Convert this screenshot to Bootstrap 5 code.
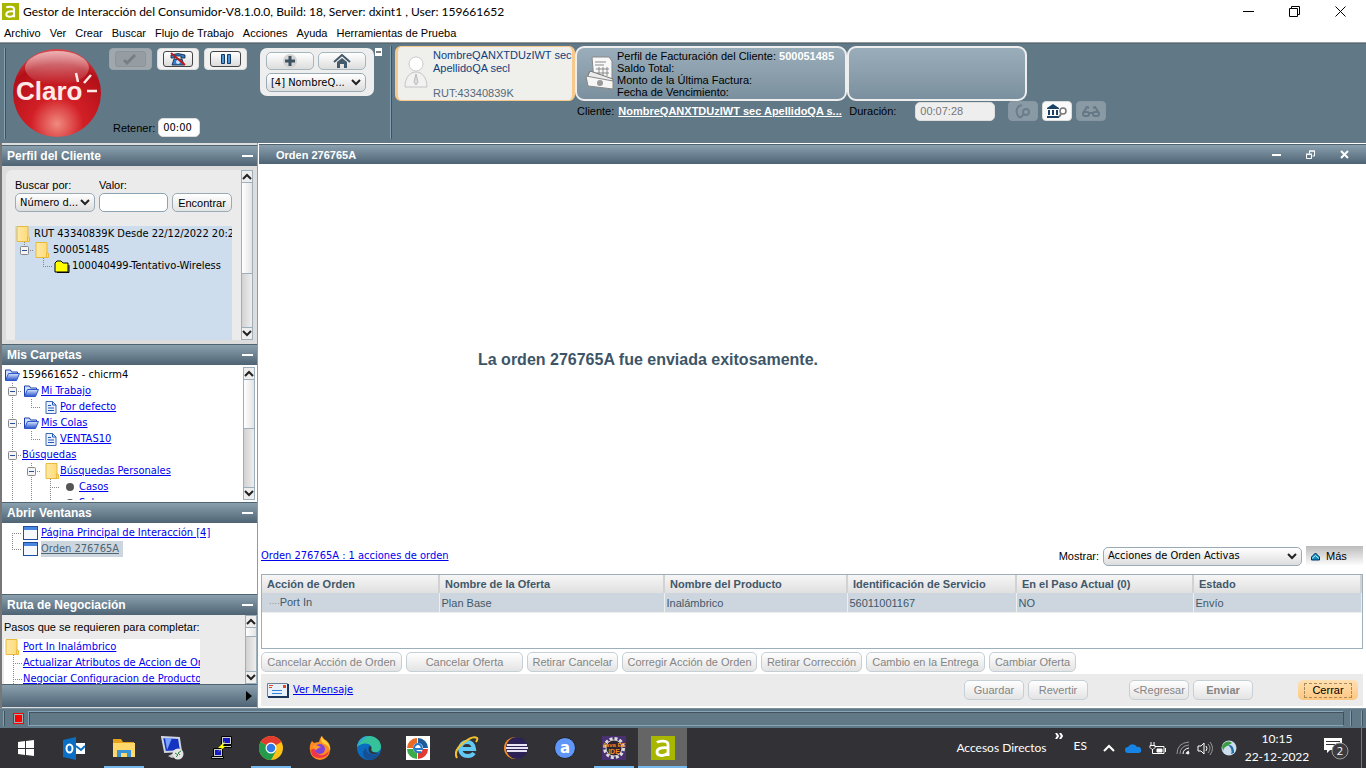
<!DOCTYPE html>
<html lang="es">
<head>
<meta charset="utf-8">
<meta name="viewport" content="width=device-width, initial-scale=1">
<title>Gestor de Interacción del Consumidor</title>
<link rel="stylesheet" href="https://cdn.jsdelivr.net/npm/bootstrap@5.3.0/dist/css/bootstrap.min.css">
<style>
:root{--slate:#617887;--edge:#9cafbb;--ink:#3d5567;--grey:#ebebeb}
body{font-family:"Liberation Sans",sans-serif;font-size:11px;line-height:16px;color:#000;background:#fff;min-width:1200px}
svg{display:block;flex:none}
a{color:#0000f0;text-underline-offset:1px}
.tah,.form-select,.tree{font-family:"DejaVu Sans Condensed","DejaVu Sans",sans-serif;font-size:11px}
.ui{font-family:Lato,"Open Sans",sans-serif}
.titlebar{height:22px;padding:1px 20px 0 2px;font-size:12px}
.titlebar button,.hdr button,.flat{background:none;border:0;padding:0;color:inherit}
.menubar{height:21px;padding:1px 0 0 4px;gap:9px;border-bottom:1px solid #999}
.menubar a{color:#000;text-decoration:none}
/* toolbar */
.toolbar{height:100px;background:var(--slate);border-top:1px solid #536a78}
.grip{width:2px;flex:none;background:#86a1b3;border-right:1px solid #3e535f}
.tbtn{width:44px;height:22px;padding:2px 5px;border-radius:4px;background:#f1f1f1;border:1px solid #ddd}
.tbtn>span{display:flex;height:16px;align-items:center;justify-content:center;border:1px solid #444;border-radius:3px;background:linear-gradient(#fff,#dcdcdc)}
.tbtn:disabled{background:#a1a8ad;border-color:#98a4ac;opacity:1}
.tbtn:disabled>span{background:#959da2;border-color:#8a949a}
.inp{height:19px;padding:0 4px;border:1px solid #ddd;border-radius:5px;background:#fff;font-size:11px;color:#000}
.navbox{width:114px;height:48px;padding:4px 8px 4px 6px;border-radius:7px;background:#eee}
.navbtn{width:48px;height:18px;padding:0;border:1px solid #a6b6bf;border-radius:5px;background:linear-gradient(#fff,#ddd)}
.form-select{height:19px;padding:0 16px 0 4px;line-height:16px;border:1px solid #9aabb6;border-radius:5px;color:#000;background-color:#eee;background-image:url("data:image/svg+xml,%3Csvg xmlns='http://www.w3.org/2000/svg' viewBox='0 0 10 7'%3E%3Cpath d='M1 1l4 4 4-4' fill='none' stroke='%23222' stroke-width='2'/%3E%3C/svg%3E"),linear-gradient(#fff,#ddd);background-size:10px 7px,100% 100%;background-position:right 4px center,0 0}
.who{width:180px;height:55px;border-radius:6px;border:solid #f8c98c;border-width:1px 3px;background:#efefec;color:#10407c;line-height:13px}
.info{height:55px;border:2px solid #eee;border-radius:9px;background:linear-gradient(#9aadba,#7b909e);line-height:12px}
.mini{width:30px;height:20px;padding:0;border-radius:4px;border:1px solid #ddd;background:#fafafa;display:flex;align-items:center;justify-content:center}
.mini:disabled{background:#a0adb5;border-color:#9aa9b2}
/* side panels */
.side{width:258px;flex:none;border-left:2px solid #777;border-right:1px solid #999;background:#ddd;padding:2px 0 1px}
.hdr{flex:none;height:21px;padding:0 4px 0 5px;color:#fff;font-weight:700;background:linear-gradient(#8aa0af,#4e6474);border-top:1px solid #50646f}
.side .hdr{font-size:12px}
.pane{min-height:0;overflow:hidden;background:#fff}
.p1{flex:170 1 0}.p2{flex:132 1 0}.p3{flex:69 1 0}.p4{flex:69 1 0}
.sbar{width:12px;flex:none;border:1px solid var(--edge);background:linear-gradient(90deg,#d2d2d2,#eee)}
.sbar>i{display:flex;flex:none;height:12px;align-items:center;justify-content:center;background:#eee;border-bottom:1px solid var(--edge)}
.sbar>i:last-child{border-bottom:0;border-top:1px solid var(--edge)}
.thumb{background:linear-gradient(90deg,#fff,#e4e4e4);border-bottom:1px solid var(--edge)}
.tree{list-style:none;margin:0;padding:0;overflow:hidden;white-space:nowrap}
.tree li{display:flex;height:16px;line-height:16px}
.tree i{width:19px;height:16px;flex:none;display:flex;align-items:center;padding-left:1px;background-repeat:no-repeat}
.tree i.gl,.tree i.gt{padding-left:5px}
.tree i.mid{padding-left:6px}
.gv{background-image:repeating-linear-gradient(#888 0 1px,transparent 1px 2px);background-size:1px 100%;background-position:9px 0}
.gl,.gt{background-image:repeating-linear-gradient(#888 0 1px,transparent 1px 2px),repeating-linear-gradient(90deg,#888 0 1px,transparent 1px 2px);background-size:1px 8px,10px 1px;background-position:9px 0,9px 8px}
.gt{background-size:1px 100%,10px 1px}
.gf{background-image:repeating-linear-gradient(#888 0 1px,transparent 1px 2px),repeating-linear-gradient(90deg,#888 0 1px,transparent 1px 2px);background-size:1px 8px,10px 1px;background-position:9px 8px,9px 8px}
.btn.ab{flex:none;height:20px;padding:0;line-height:16px;font-size:11px;white-space:nowrap;color:#000;border:1px solid #9aabb6;border-radius:5px;background:linear-gradient(#fff,#e4e4e4)}
.btn.ab:disabled{color:#858585;border-color:#c5cfd6;opacity:1}
.btn.w60{width:60px}
.btn.ab.go{border:0;background:linear-gradient(#ffe0b2,#fdc77f)}
.btn.go span{display:block;margin:0 6px;line-height:13px;border:1px dashed #a98a5c}
/* order grid */
.gridbox{height:75px;border:1px solid var(--edge)}
.gridbox table{width:100%;table-layout:fixed;color:#41586a}
.gridbox th{height:18px;padding:0 5px;line-height:18px;background:linear-gradient(#f6f6f6,#e0e0e0);border-right:2px solid #d2d2d2}
.gridbox td{height:19px;padding:1px 2px 0;line-height:17px;background:#cdd6de;border-right:1px solid #eee;border-bottom:1px solid #eee}
.msg{font-size:16px;font-weight:700;color:var(--ink);margin-left:219px;padding-top:10px}
.status{height:20px;padding:2px 3px;background:var(--slate);border-top:1px solid #7c909d}
.well{border:1px solid #87a5b8;border-right-color:#3e535f;box-shadow:inset 1px 1px #40525e}
.red{width:11px;height:11px;background:red;border:1px solid red;box-shadow:inset 0 0 0 1px #a9aaaa}
/* taskbar */
.taskbar{height:40px;background:#323236;color:#fff;font-size:12px;padding-left:1px}
.taskbar .app{width:49px;height:40px;padding:2px 0 0;border:0;border-bottom:2px solid transparent;background:none;display:flex;align-items:center;justify-content:center}
.app.run{background:linear-gradient(#76b9ed,#76b9ed) center bottom/40px 2px no-repeat!important;background-origin:border-box!important;background-clip:border-box!important}
.taskbar .app.on{background:#656565;border-bottom-color:#76b9ed}
</style>
</head>
<body class="d-flex flex-column vh-100 overflow-hidden">
<svg width="0" height="0" class="position-absolute" aria-hidden="true">
<defs>
<linearGradient id="gb" x2="0" y2="1"><stop stop-color="#dce8ff"/><stop offset="1" stop-color="#2450c8"/></linearGradient>
<linearGradient id="gy"><stop stop-color="#ffe9a5"/><stop offset="1" stop-color="#ffd873"/></linearGradient>
<symbol id="box" viewBox="0 0 9 9"><rect x=".5" y=".5" width="8" height="8" rx="1" fill="#f4f4f4" stroke="#888"/><path d="M2 4.5h5" stroke="#2a4fa0"/></symbol>
<symbol id="note" viewBox="0 0 14 16"><path d="M1 .5h11v10l1.500 1v4H1z" fill="url(#gy)" stroke="#e8b93a"/><path d="M11.500 15v-4l1-1" fill="none" stroke="#e8b93a"/></symbol>
<symbol id="fold" viewBox="0 0 16 14"><path d="M1.500 12V2h5l1 2h6v3" fill="#cfe0ff" stroke="#1c3fa8"/><path d="M1.500 12.500l3-7h11l-3 7z" fill="url(#gb)" stroke="#2d57cf"/></symbol>
<symbol id="doc" viewBox="0 0 12 13"><path d="M1 .5h6.500l3.500 3.500v8.500H1z" fill="#eaf2ff" stroke="#3f69b0"/><path d="M7.500.5V4H11M3 4.500h3M3 7h6M3 9.500h6" fill="none" stroke="#2458b8"/></symbol>
<symbol id="win" viewBox="0 0 15 14"><rect x=".5" y=".5" width="14" height="13" fill="#f5f9ff" stroke="#1e4ca0"/><path d="M1 1h13v3H1z" fill="#4a86e0"/></symbol>
<symbol id="up" viewBox="0 0 10 7"><path d="M1 6l4-4 4 4" fill="none" stroke="#222" stroke-width="2"/></symbol>
<symbol id="dn" viewBox="0 0 10 7"><path d="M1 1l4 4 4-4" fill="none" stroke="#222" stroke-width="2"/></symbol>
<symbol id="amd" viewBox="0 0 24 24"><path fill="#a9b600" d="M0 0h24v24H0z"/><path d="M6 6.500c2-1.700 11-2.500 11 2V20M17 12c-5-1-11 0-11 4s7 5 11 1" fill="none" stroke="#fff" stroke-width="2.800"/></symbol>
</defs>
</svg>

<header class="titlebar ui d-flex align-items-center flex-shrink-0">
  <svg width="17" height="17" class="me-1"><use href="#amd"/></svg>
  <span class="flex-grow-1 text-nowrap">Gestor de Interacción del Consumidor-V8.1.0.0, Build: 18, Server: dxint1 , User: 159661652</span>
  <div class="d-flex" style="gap:35px">
    <button aria-label="Minimizar"><svg width="11" height="11"><path d="M0 5.500h11" stroke="#000"/></svg></button>
    <button aria-label="Restaurar"><svg width="11" height="11" fill="none" stroke="#000"><path d="M.5 2.500h8v8h-8zM2.500 2V.5h8v8H9"/></svg></button>
    <button aria-label="Cerrar ventana"><svg width="11" height="11"><path d="M.5.5l10 10m0-10l-10 10" stroke="#000"/></svg></button>
  </div>
</header>
<nav class="menubar d-flex align-items-center flex-shrink-0">
  <a href="#">Archivo</a><a href="#">Ver</a><a href="#">Crear</a><a href="#">Buscar</a><a href="#">Flujo de Trabajo</a><a href="#">Acciones</a><a href="#">Ayuda</a><a href="#">Herramientas de Prueba</a>
</nav>

<section class="toolbar d-flex flex-shrink-0">
  <div class="d-flex ps-1 pt-1 pb-1" style="width:390px">
    <div class="grip"></div>
    <svg width="92" height="92" viewBox="0 0 92 92" class="ms-1" style="width:92px">
      <defs><radialGradient id="rg" cx=".5" cy=".85" r=".85"><stop stop-color="#f08a80"/><stop offset=".35" stop-color="#d21f26"/><stop offset=".8" stop-color="#b30f18"/><stop offset="1" stop-color="#d8484c"/></radialGradient>
      <linearGradient id="rt" x2="0" y2="1"><stop stop-color="#fff" stop-opacity=".6"/><stop offset="1" stop-color="#fff" stop-opacity="0"/></linearGradient></defs>
      <circle cx="47" cy="45" r="44" fill="url(#rg)"/><ellipse cx="47" cy="20" rx="32" ry="17" fill="url(#rt)"/>
      <text x="6" y="52" font-family="Liberation Sans" font-weight="700" font-size="26" fill="#ffe9e6">Claro</text>
      <path d="M66 25l2 9M81 27l-7 8M77 43h10" stroke="#ffe9e6" stroke-width="2.500"/>
    </svg>
    <div class="d-flex flex-column justify-content-between" style="width:145px;padding:0 0 2px 7px">
      <div class="d-flex" style="gap:5px">
        <button class="btn tbtn" disabled aria-label="Aceptar"><span><svg width="14" height="11"><path d="M1 6l3 3 8-8" fill="none" stroke="#777f84" stroke-width="3"/></svg></span></button>
        <button class="btn tbtn" aria-label="Colgar"><span><svg width="18" height="14"><path d="M2 3q7-3 14 0v3h-4V4H6v2H2zM5 7h8l2 6H3z" fill="#2f7fd0" stroke="#123" stroke-width=".8"/><circle cx="9" cy="10" r="2" fill="#cfe4ff"/><path d="M2 1l14 12" stroke="#c01818" stroke-width="2"/></svg></span></button>
        <button class="btn tbtn" aria-label="Pausa"><span><svg width="12" height="10" fill="#4a96d8" stroke="#123a66"><path d="M1.500.5h3v9h-3zM7.500.5h3v9h-3z"/></svg></span></button>
      </div>
      <div class="d-flex align-items-center" style="gap:3px"><label for="ret" class="ps-1">Retener:</label><input id="ret" class="inp tah" value="00:00" size="4" style="width:42px"></div>
    </div>
    <div class="navbox d-flex flex-column justify-content-between ms-auto">
      <div class="d-flex gap-1">
        <button class="btn navbtn" aria-label="Agregar"><svg class="m-auto" width="16" height="14"><circle cx="8" cy="7" r="7" fill="#d4d4d4"/><path d="M8 2v10M3 7h10" stroke="#3c5362" stroke-width="3"/></svg></button>
        <button class="btn navbtn" aria-label="Inicio"><svg class="m-auto" width="18" height="15"><path d="M1 8l8-7 8 7" fill="none" stroke="#44596a" stroke-width="2"/><path d="M4 8l5-4 5 4v6h-3v-4H7v4H4z" fill="#44596a"/></svg></button>
      </div>
      <select class="form-select" aria-label="Interacción"><option>[4] NombreQ...</option></select>
    </div>
    <button class="flat align-self-start" aria-label="Contraer" style="margin:0 8px 0 1px"><svg width="7" height="8"><path fill="#fff" d="M0 0h7v8H0z"/><path d="M1 4h5" stroke="#000"/></svg></button>
  </div>
  <div class="d-flex pt-1 pb-1" style="margin-top:-2px"><div class="grip me-1"></div></div>
  <div style="margin:2px 0 0 -1px">
    <div class="d-flex">
      <div class="who d-flex">
        <svg width="28" height="42" viewBox="0 0 28 42" class="ms-1 mt-2"><circle cx="14" cy="9" r="7" fill="#fff" stroke="#ccc"/><path d="M3 32c0-20 22-20 22 0z" fill="#f2f2f2" stroke="#c4c4c4"/><path d="M14 19l-2 8 2 3 2-3z" fill="#ddd" stroke="#bbb"/></svg>
        <div class="d-flex flex-column justify-content-between text-nowrap" style="padding:2px 0 0 3px"><div>NombreQANXTDUzIWT sec<br>ApellidoQA secl</div><div style="color:#55697a">RUT:43340839K</div></div>
      </div>
      <div class="info d-flex text-nowrap" style="width:272px">
        <svg width="31" height="36" viewBox="0 0 31 36" class="ms-2 me-0 mt-2"><path d="M7 1h17l3 4v19L9 25z" fill="#f8f8f8" stroke="#888"/><path d="M10 6h11M10 9h9M11 13h13M11 17h13M14 11v9M18 11v9M22 11v9" stroke="#8a8a8a"/><path d="M5 15l23 8-3 10-24-9z" fill="#ececec" stroke="#777"/><path d="M1 20l27 5v8l-25-3z" fill="#f6f6f6" stroke="#888"/><circle cx="15" cy="27" r="3" fill="#999"/></svg>
        <div style="padding:2px 0 0 1px">Perfil de Facturación del Cliente: <b class="text-white">500051485</b><br>Saldo Total:<br>Monto de la Última Factura:<br>Fecha de Vencimiento:</div>
      </div>
      <div class="info" style="width:180px"></div>
    </div>
    <div class="d-flex align-items-center text-nowrap" style="padding-left:182px">
      <span>Cliente:</span><a href="#" class="text-white fw-bold ms-1" style="width:228px">NombreQANXTDUzIWT sec ApellidoQA s...</a>
      <label for="dur" style="width:69px;padding-left:3px">Duración:</label><input id="dur" class="inp" style="width:80px;color:#777;background:#eee" value="00:07:28" readonly>
      <div class="d-flex gap-1" style="margin-left:13px">
        <button class="btn mini" disabled aria-label="Llamadas"><svg width="18" height="15" fill="none" stroke="#70828e" stroke-width="2"><path d="M8 1L5 2Q0 7 5 13h3"/><circle cx="12" cy="8" r="3"/><path d="M10 10l-4 4"/></svg></button>
        <button class="btn mini" aria-label="Banco"><svg width="20" height="14"><path d="M0 4l6-4 6 4v1H0zM1 6h2v5H1zM5 6h2v5H5zM9 6h2v5H9zM0 12h12v2H0z" fill="#1b4166"/><circle cx="16" cy="7" r="3" fill="#fff" stroke="#777" stroke-width="1.500"/><path d="M14 10l-2 3" stroke="#777" stroke-width="2"/></svg></button>
        <button class="btn mini" disabled aria-label="Ver"><svg width="18" height="13" fill="none" stroke="#667986" stroke-width="2"><rect x="1" y="7" width="6" height="4" rx="2"/><rect x="11" y="7" width="6" height="4" rx="2"/><path d="M7 8h4M1 8l4-6 2 1M17 8l-4-6-2 1"/></svg></button>
      </div>
    </div>
  </div>
</section>

<div class="d-flex flex-grow-1" style="min-height:0">
  <aside class="side d-flex flex-column">
    <div class="hdr d-flex align-items-center justify-content-between">Perfil del Cliente<button aria-label="Contraer perfil"><svg width="11" height="2"><path fill="#fff" d="M0 0h11v2H0z"/></svg></button></div>
    <div class="pane p1 d-flex" style="background:#ddd;padding:4px">
      <div class="flex-grow-1 d-flex flex-column" style="background:var(--grey);border-radius:6px 0 0 0;padding:7px 9px 0;min-width:0">
        <div class="d-flex align-items-end" style="gap:4px;margin-bottom:14px">
          <div><label for="bp" class="d-block">Buscar por:</label><select id="bp" class="form-select" style="width:80px"><option>Número d...</option></select></div>
          <div class="flex-grow-1" style="min-width:0"><label for="vl" class="d-block">Valor:</label><input id="vl" class="inp w-100 d-block" style="border-color:#8ba3b3"></div>
          <button class="btn ab w60" style="height:19px">Encontrar</button>
        </div>
        <ul class="tree flex-grow-1" style="background:#cddded">
          <li><i><svg width="14" height="16"><use href="#note"/></svg></i>RUT 43340839K Desde 22/12/2022 20:21</li>
          <li><i class="gl"><svg width="9" height="9"><use href="#box"/></svg></i><i><svg width="14" height="16"><use href="#note"/></svg></i>500051485</li>
          <li><i></i><i class="gl"></i><i><svg width="16" height="13"><path d="M1 11V3l2-2h4l2 2h5v9H1z" fill="#ff0" stroke="#000"/><path d="M3 12.500h12V5" fill="none" stroke="#000"/></svg></i>100040499-Tentativo-Wireless</li>
        </ul>
      </div>
      <div class="sbar d-flex flex-column"><i><svg width="10" height="7"><use href="#up"/></svg></i><div class="thumb" style="flex:92 1 0"></div><div style="flex:54 1 0"></div><i><svg width="10" height="7"><use href="#dn"/></svg></i></div>
    </div>
    <div class="hdr d-flex align-items-center justify-content-between">Mis Carpetas<button aria-label="Contraer carpetas"><svg width="11" height="2"><path fill="#fff" d="M0 0h11v2H0z"/></svg></button></div>
    <div class="pane p2 d-flex" style="padding:2px 2px 2px 1px">
      <ul class="tree flex-grow-1">
        <li><i><svg width="16" height="14"><use href="#fold"/></svg></i>159661652 - chicrm4</li>
        <li><i class="gt"><svg width="9" height="9"><use href="#box"/></svg></i><i><svg width="16" height="14"><use href="#fold"/></svg></i><a href="#">Mi Trabajo</a></li>
        <li><i class="gv"></i><i class="gl"></i><i class="ps-1"><svg width="12" height="13"><use href="#doc"/></svg></i><a href="#">Por defecto</a></li>
        <li><i class="gt"><svg width="9" height="9"><use href="#box"/></svg></i><i><svg width="16" height="14"><use href="#fold"/></svg></i><a href="#">Mis Colas</a></li>
        <li><i class="gv"></i><i class="gl"></i><i class="ps-1"><svg width="12" height="13"><use href="#doc"/></svg></i><a href="#">VENTAS10</a></li>
        <li><i class="gt"><svg width="9" height="9"><use href="#box"/></svg></i><a href="#">Búsquedas</a></li>
        <li><i class="gv"></i><i class="gt"><svg width="9" height="9"><use href="#box"/></svg></i><i class="ps-1"><svg width="14" height="16"><use href="#note"/></svg></i><a href="#">Búsquedas Personales</a></li>
        <li><i class="gv"></i><i class="gv"></i><i class="gt"></i><i class="mid"><svg width="8" height="8"><circle cx="4" cy="4" r="4" fill="#555"/></svg></i><a href="#">Casos</a></li>
        <li><i class="gv"></i><i class="gv"></i><i class="gt"></i><i class="mid"><svg width="8" height="8"><circle cx="4" cy="4" r="4" fill="#555"/></svg></i><a href="#">Subcasos</a></li>
      </ul>
      <div class="sbar d-flex flex-column"><i><svg width="10" height="7"><use href="#up"/></svg></i><div class="thumb" style="flex:50 1 0"></div><div style="flex:60 1 0"></div><i><svg width="10" height="7"><use href="#dn"/></svg></i></div>
    </div>
    <div class="hdr d-flex align-items-center justify-content-between">Abrir Ventanas<button aria-label="Contraer ventanas"><svg width="11" height="2"><path fill="#fff" d="M0 0h11v2H0z"/></svg></button></div>
    <div class="pane p3" style="padding:2px 0 0 1px">
      <ul class="tree">
        <li><i class="gf"></i><i><svg width="15" height="14"><use href="#win"/></svg></i><a href="#">Página Principal de Interacción [4]</a></li>
        <li><i class="gl"></i><i><svg width="15" height="14"><use href="#win"/></svg></i><a href="#" style="background:#cdd6de;color:#4d6575;padding-right:4px">Orden 276765A</a></li>
      </ul>
    </div>
    <div class="hdr d-flex align-items-center justify-content-between">Ruta de Negociación<button aria-label="Contraer ruta"><svg width="11" height="2"><path fill="#fff" d="M0 0h11v2H0z"/></svg></button></div>
    <div class="pane p4 d-flex" style="background:var(--grey)">
      <div class="flex-grow-1" style="padding:4px 0 0 2px;min-width:0">
        <div class="mb-1">Pasos que se requieren para completar:</div>
        <ul class="tree bg-white" style="width:196px">
          <li><i><svg width="14" height="16"><use href="#note"/></svg></i><a href="#">Port In Inalámbrico</a></li>
          <li><i class="gt"></i><a href="#">Actualizar Atributos de Accion de Orden</a></li>
          <li><i class="gt"></i><a href="#">Negociar Configuracion de Producto</a></li>
        </ul>
      </div>
      <div class="sbar d-flex flex-column"><i><svg width="10" height="7"><use href="#up"/></svg></i><div class="thumb" style="flex:8 1 0"></div><div style="flex:36 1 0"></div><i><svg width="10" height="7"><use href="#dn"/></svg></i></div>
    </div>
    <div class="hdr d-flex align-items-center justify-content-end" style="height:23px"><button aria-label="Más pasos"><svg width="8" height="10"><path d="M1 0l6 5-6 5z"/></svg></button></div>
  </aside>

  <main class="flex-grow-1 d-flex flex-column" style="min-width:0;padding:1px 0 2px 1px">
    <div class="hdr d-flex align-items-center" style="height:20px;padding:0 17px"><span class="flex-grow-1">Orden 276765A</span>
      <div class="d-flex align-items-center" style="gap:25px">
        <button aria-label="Minimizar orden"><svg width="9" height="8"><path fill="#fff" d="M0 3h9v2H0z"/></svg></button>
        <button aria-label="Restaurar orden"><svg width="9" height="9" fill="none" stroke="#fff"><path d="M.5 4.500h5v4h-5zM3.500 3.500V1h5v5h-2M0 4h6M3 1h6"/></svg></button>
        <button aria-label="Cerrar orden"><svg width="9" height="9"><path d="M1 1l7 7m0-7L1 8" stroke="#fff" stroke-width="2"/></svg></button>
      </div>
    </div>
    <div class="flex-grow-1 d-flex align-items-center"><p class="msg mb-0">La orden 276765A fue enviada exitosamente.</p></div>
    <div class="d-flex flex-column" style="padding:0 3px 0 2px">
      <div class="d-flex align-items-center" style="height:20px;margin-bottom:8px">
        <a href="#" class="tah me-auto">Orden 276765A : 1 acciones de orden</a>
        <label for="mo" class="me-1">Mostrar:</label>
        <select id="mo" class="form-select me-1" style="width:199px"><option>Acciones de Orden Activas</option></select>
        <button class="flat d-flex align-items-center align-self-stretch" style="width:57px;padding-left:5px;gap:6px;background:linear-gradient(#bbb,#fff)"><svg width="9" height="9"><path d="M.5 5l4-4 4 4v3h-8z" fill="#18b" stroke="#036"/><path d="M1 6.500l3.500-3 3.500 3" fill="none" stroke="#bff"/></svg>Más</button>
      </div>
      <div class="gridbox" style="margin-bottom:3px">
        <table><colgroup><col style="width:177px"><col style="width:225px"><col style="width:183px"><col style="width:169px"><col style="width:177px"><col></colgroup>
          <thead><tr><th>Acción de Orden</th><th>Nombre de la Oferta</th><th>Nombre del Producto</th><th>Identificación de Servicio</th><th>En el Paso Actual (0)</th><th>Estado</th></tr></thead>
          <tbody><tr><td><span style="color:#777;font-size:8px;padding-left:5px">····</span>Port In</td><td>Plan Base</td><td>Inalámbrico</td><td>56011001167</td><td>NO</td><td>Envío</td></tr></tbody>
        </table>
      </div>
      <div class="d-flex gap-1 align-items-center" style="height:20px">
        <button class="btn ab" style="width:141px" disabled>Cancelar Acción de Orden</button><button class="btn ab" style="width:117px" disabled>Cancelar Oferta</button><button class="btn ab" style="width:91px" disabled>Retirar Cancelar</button><button class="btn ab" style="width:135px" disabled>Corregir Acción de Orden</button><button class="btn ab" style="width:101px" disabled>Retirar Corrección</button><button class="btn ab" style="width:119px" disabled>Cambio en la Entrega</button><button class="btn ab" style="width:87px" disabled>Cambiar Oferta</button>
      </div>
      <div class="d-flex align-items-center" style="height:32px;margin-top:2px;padding:0 5px 0 6px;background:var(--grey)">
        <svg width="22" height="15" class="me-1"><path fill="#e8f0fa" stroke="#68809a" d="M.5.5h20v13H.5z"/><path d="M1 14h20V1" fill="none" stroke="#18355c" stroke-width="2"/><path d="M5 7.500h10M5 10.500h10" stroke="#2e84dc"/><path fill="#e04a18" d="M2 2h4v1H2zM2 4h3v1H2zM16 2h3v3h-3z"/></svg>
        <a href="#" class="tah me-auto">Ver Mensaje</a>
        <button class="btn ab w60 me-1" disabled>Guardar</button><button class="btn ab w60" disabled>Revertir</button>
        <button class="btn ab w60 me-1" style="margin-left:41px" disabled>&lt;Regresar</button><button class="btn ab w60 fw-bold" style="margin-right:45px" disabled>Enviar</button>
        <button class="btn ab w60 go"><span>Cerrar</span></button>
      </div>
    </div>
  </main>
</div>

<div class="status d-flex align-items-stretch flex-shrink-0">
  <div class="grip me-2"></div><span class="red align-self-center me-1"></span><div class="well flex-grow-1"></div>
  <div class="grip" style="margin:0 9px 0 6px"></div><div class="grip"></div>
</div>

<footer class="taskbar ui d-flex align-items-center flex-shrink-0">
  <button class="app" aria-label="Inicio"><svg width="16" height="16" fill="#fff"><path d="M0 2l7-1v7H0zM8 1l8-1v8H8zM0 9h7v6l-7-1zM8 9h8v7l-8-1z"/></svg></button>
  <button class="app" aria-label="Outlook"><svg width="23" height="23"><path fill="#fff" d="M12 6h10v11H12z"/><path d="M13 9l5 4 4-4" fill="none" stroke="#0a6fc4" stroke-width="2"/><path fill="#0a6fc4" d="M0 3l13-3v23L0 20z"/><ellipse cx="6.500" cy="11.500" rx="3" ry="4" fill="none" stroke="#fff" stroke-width="2"/></svg></button>
  <button class="app run" aria-label="Explorador"><svg width="22" height="18"><path fill="#e3a21a" d="M0 0h8l2 3h11v4H0z"/><path fill="#ffd86b" d="M0 4h22v14H0z"/><path fill="#3a93d6" d="M4 11h14v7h-4v-4H8v4H4z"/></svg></button>
  <button class="app" aria-label="Escritorio remoto"><svg width="24" height="24"><path d="M1 1l17 1 2 13-16 1z" fill="#1433c0" stroke="#cfd4e2" stroke-width="2"/><path d="M4 2h7l-5 12z" fill="#7aa0ff"/><path d="M7 20l8-4 4 3-8 3z" fill="#ccc"/><circle cx="17" cy="18" r="5.500" fill="#e4e4e4"/><path d="M14 17l3 2-2 2M20 15l-3 2 2 2" fill="none" stroke="#2a8a3a"/></svg></button>
  <button class="app" aria-label="PuTTY"><svg width="24" height="24"><g fill="#ccc" stroke="#000"><path d="M11.500.5h10v8h-10zM12.500 9.500h9v2h-9zM3.500 12.500h9v8h-9zM1.500 20.500h12v2h-12z"/></g><path fill="#1418c8" d="M13 2h7v5h-7zM5 14h6v5H5z"/><path d="M15 5l-7 7 4 0-5 5 9-7-3 0z" fill="#ff0"/></svg></button>
  <button class="app run" aria-label="Chrome"><svg width="24" height="24"><circle cx="12" cy="12" r="12" fill="#fbc116"/><path d="M12 12L1.600 6A12 12 0 0 1 22.400 6z" fill="#e33b2e"/><path d="M12 12L1.600 6A12 12 0 0 0 12 24l5-9z" fill="#229b4a"/><circle cx="12" cy="12" r="5.500" fill="#fff"/><circle cx="12" cy="12" r="4.300" fill="#3079e8"/></svg></button>
  <button class="app" aria-label="Firefox"><svg width="24" height="24"><path d="M4 5l2 2q3-1 5-1 1-4 3-6 2 4 5 5 4 4 3 9A10 10 0 0 1 2 14Q1 9 4 5z" fill="#ff8a1f"/><path d="M13 0q2 4 5 5 5 5 4 10-1-6-6-7-4-2-3-8z" fill="#ffd43b"/><path d="M3 14q0 8 9 8 8-1 9-7-4 5-9 4-5-2-5-7z" fill="#f0364a"/><circle cx="12" cy="13" r="5" fill="#7e43d8"/><path d="M5 9q4 0 8 2-3 1-5 3-3-1-3-5z" fill="#ff9a2e"/></svg></button>
  <button class="app" aria-label="Edge"><svg width="24" height="24"><circle cx="12" cy="12" r="12" fill="#0b6cc0"/><path d="M0 11C1 3 7 0 12 0c8 0 12 6 12 11 0 4-4 6-8 5-3-1 0-3-2-6-3-4-10-3-14 1z" fill="#35c29a"/><path d="M0 11C1 3 7 0 12 0 7 2 3 6 0 11z" fill="#2ca6dc"/><path d="M9 12q0 8 13 6-3 6-10 6-7-2-6-8 1-3 3-4z" fill="#164f94"/><path d="M12 10q3 0 2 4 1 3 8 3-2 1-5 1-7 0-5-8z" fill="#323236"/></svg></button>
  <button class="app" aria-label="Navegadores"><svg width="24" height="24"><path fill="#fff" d="M0 0h24v24H0z"/><path d="M11 12V2A10 10 0 0 0 1 12z" fill="#e96a24"/><path d="M12 12V2A10 10 0 0 1 22 12z" fill="#1c5b9c"/><path d="M11 13v10A10 10 0 0 1 1 13z" fill="#3aaa4a"/><path d="M12 13v10a10 10 0 0 0 10-10z" fill="#e03a32"/><circle cx="12" cy="12" r="5" fill="#fff"/><path d="M8 13h8q-1-5-4-5t-4 4q1 5 7 4" fill="none" stroke="#2a78c8" stroke-width="2"/></svg></button>
  <button class="app" aria-label="Internet Explorer"><svg width="24" height="24"><path d="M6 13h13q-1-7-7-7t-7 7q1 7 8 7 4 0 6-3" fill="none" stroke="#62c9f4" stroke-width="4"/><path d="M2 22Q-2 15 8 7t14-5q1 1-1 4" fill="none" stroke="#f2c32c" stroke-width="2"/></svg></button>
  <button class="app" aria-label="Eclipse"><svg width="24" height="24"><circle cx="11" cy="12" r="11" fill="#f09020"/><circle cx="13" cy="12" r="11" fill="#2c2255"/><path d="M3 9h20M2 12h22M3 15h20" stroke="#e8e4f4" stroke-width="2"/></svg></button>
  <button class="app" aria-label="Aplicación a"><svg width="22" height="22"><circle cx="11" cy="11" r="10.500" fill="#6096f8" stroke="#222"/><text x="11" y="16" text-anchor="middle" font-family="DejaVu Sans" font-weight="700" font-size="15" fill="#fff">a</text></svg></button>
  <button class="app run" aria-label="Java EE IDE"><svg width="24" height="24"><path fill="#493070" d="M0 0h24v24H0z"/><circle cx="12" cy="12" r="9.500" fill="none" stroke="#ddd" stroke-width="3" stroke-dasharray="3 2"/><circle cx="12" cy="12" r="8" fill="#2e2430" stroke="#ccc"/><text x="12" y="11" text-anchor="middle" font-family="Liberation Sans" font-size="6" font-weight="700" fill="#f38a20">Java EE</text><text x="12" y="18" text-anchor="middle" font-family="Liberation Sans" font-size="7" font-weight="700" fill="#f38a20">IDE</text></svg></button>
  <button class="app on" aria-label="Gestor"><svg width="24" height="24"><use href="#amd"/></svg></button>
  <div class="ms-auto d-flex align-items-center text-nowrap">
    <span>Accesos Directos</span>
    <svg width="8" height="6" class="ms-2 mb-4"><path d="M1 0l2 3-2 3M5 0l2 3-2 3" fill="none" stroke="#fff" stroke-width="2"/></svg>
    <span style="margin:0 16px 4px 11px">ES</span>
    <svg width="12" height="8"><path d="M1 7l5-5 5 5" fill="none" stroke="#fff" stroke-width="2"/></svg>
    <svg width="17" height="11" style="margin:0 7px 0 10px"><path d="M3 10a3 3 0 0 1 0-6 5 5 0 0 1 9 0 3 3 0 0 1 2 6z" fill="#1684e4"/></svg>
    <svg width="17" height="13" fill="none" stroke="#fff"><path d="M6 4.500h9v7H5M16.500 6v4M1 3.500h5v2l-2 2H3l-2-2zM2 0v3M5 0v3M3.500 8v3.500H6"/><path fill="#fff" d="M8 7h5v3H8z"/></svg>
    <svg width="14" height="14" style="margin:0 7px 0 10px" fill="none" stroke="#fff"><path d="M10 13q0-2 3-3M7 13q0-5 6-6"/><path d="M4 13q0-8 9-9M1 13Q1 2 13 1" stroke="#999"/><circle cx="12" cy="12" r="1" fill="#fff"/></svg>
    <svg width="17" height="14" fill="none" stroke="#fff"><path d="M1 5h3l3-3v11l-3-3H1zM9 5q2 2 0 5"/><path d="M11 3q4 4 0 9M13 1q5 6 0 13" stroke="#999"/></svg>
    <svg width="16" height="16" style="margin:0 0 0 7px"><circle cx="8" cy="8" r="7.500" fill="#cde"/><path d="M1 6q5-7 10-3L6 6q-3 1-4 5z" fill="#3b9a3e"/><path d="M7 5q6-1 6 8l-3 1q2-5-3-9z" fill="#1f6fa8"/></svg>
    <div class="text-center" style="width:80px;line-height:18px">10:15<br>22-12-2022</div>
    <svg width="26" height="26" style="margin:0 12px 0 6px"><path d="M1 3h18v12H7l-3 3v-3H1z" fill="#fff"/><path d="M3 6.500h14M3 9.500h14" stroke="#323236"/><circle cx="17" cy="16" r="8" fill="#3c3c40" stroke="#999"/><text x="17" y="20" text-anchor="middle" font-family="Open Sans" font-size="11" fill="#fff">2</text></svg>
    <div style="width:5px;height:40px;border-left:1px solid #777"></div>
  </div>
</footer>
<script src="https://cdn.jsdelivr.net/npm/bootstrap@5.3.0/dist/js/bootstrap.bundle.min.js"></script>
</body>
</html>
